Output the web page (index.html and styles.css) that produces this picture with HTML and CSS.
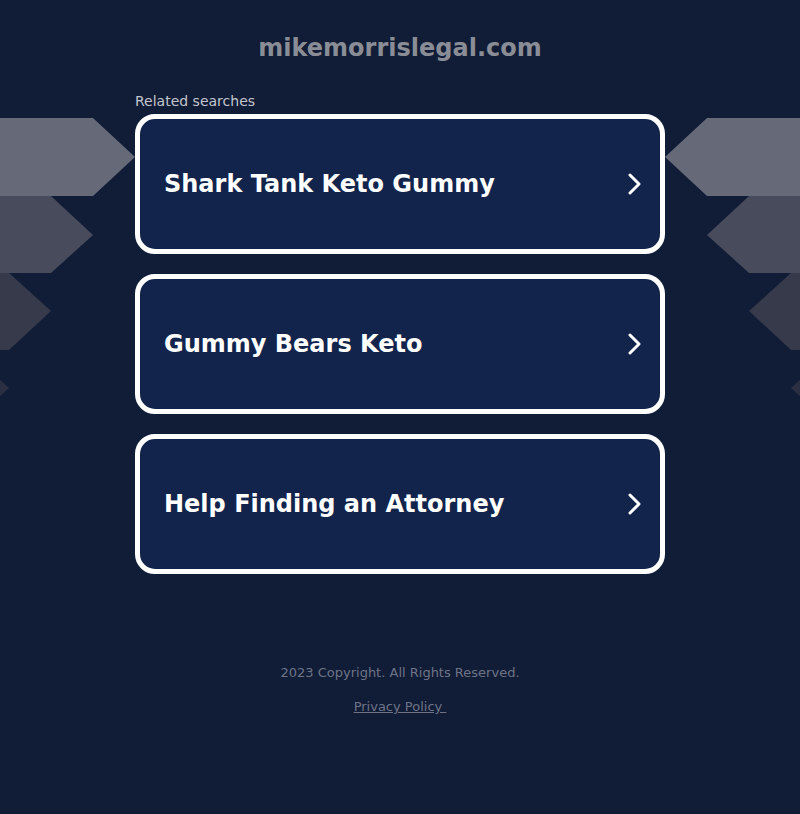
FILE: index.html
```html
<!DOCTYPE html>
<html lang="en">
<head>
<meta charset="utf-8">
<title>mikemorrislegal.com</title>
<link rel="stylesheet" href="styles.css">
</head>
<body>
<div class="page">
  <svg class="deco deco-left" width="140" height="320" viewBox="0 0 140 320" aria-hidden="true">
    <polygon points="0,0 93,0 135,39 93,78 0,78" fill="#656978"/>
    <polygon points="0,78 51,78 93,117 51,155 0,155" fill="#474b5b"/>
    <polygon points="0,155 9,155 51,193 9,232 0,232" fill="#363a4b"/>
    <polygon points="0,232 -33,232 9,270 -33,309" fill="#2a3042"/>
  </svg>
  <svg class="deco deco-right" width="140" height="320" viewBox="0 0 140 320" aria-hidden="true">
    <polygon points="140,0 47,0 5,39 47,78 140,78" fill="#656978"/>
    <polygon points="140,78 89,78 47,117 89,155 140,155" fill="#474b5b"/>
    <polygon points="140,155 131,155 89,193 131,232 140,232" fill="#363a4b"/>
    <polygon points="140,232 173,232 131,270 173,309" fill="#2a3042"/>
  </svg>

  <header class="site-title">mikemorrislegal.com</header>

  <main class="searches">
    <div class="searches-label">Related searches</div>
    <a class="search-card" href="#">
      <span class="search-text">Shark Tank Keto Gummy</span>
      <svg class="chevron" width="16" height="22" viewBox="0 0 16 22"><polyline points="3,2 12,11 3,20" fill="none" stroke="#fff" stroke-width="3" stroke-linecap="round" stroke-linejoin="round"/></svg>
    </a>
    <a class="search-card" href="#">
      <span class="search-text">Gummy Bears Keto</span>
      <svg class="chevron" width="16" height="22" viewBox="0 0 16 22"><polyline points="3,2 12,11 3,20" fill="none" stroke="#fff" stroke-width="3" stroke-linecap="round" stroke-linejoin="round"/></svg>
    </a>
    <a class="search-card" href="#">
      <span class="search-text">Help Finding an Attorney</span>
      <svg class="chevron" width="16" height="22" viewBox="0 0 16 22"><polyline points="3,2 12,11 3,20" fill="none" stroke="#fff" stroke-width="3" stroke-linecap="round" stroke-linejoin="round"/></svg>
    </a>
  </main>

  <footer class="footer">
    <div class="copyright">2023 Copyright. All Rights Reserved.</div>
    <a class="privacy" href="#">Privacy Policy </a>
  </footer>
</div>
</body>
</html>
```

FILE: styles.css
```css
html, body {
  margin: 0;
  padding: 0;
  background: #111c36;
  font-family: "DejaVu Sans", sans-serif;
}

.page {
  position: relative;
  width: 800px;
  height: 814px;
  overflow: hidden;
  display: flex;
  flex-direction: column;
  align-items: center;
}

.deco {
  position: absolute;
  top: 118px;
  overflow: visible;
}
.deco-left { left: 0; }
.deco-right { right: 0; }

.site-title {
  margin-top: 33px;
  height: 30px;
  line-height: 30px;
  font-size: 24px;
  font-weight: bold;
  color: #8a8d96;
}

.searches {
  position: relative;
  width: 530px;
  margin-top: 30px;
  display: flex;
  flex-direction: column;
  gap: 20px;
}

.searches-label {
  font-size: 14px;
  line-height: 16px;
  color: #c1c5cd;
  margin-bottom: -15px;
}

.search-card {
  box-sizing: border-box;
  height: 140px;
  border: 5px solid #ffffff;
  border-radius: 20px;
  background: #12244c;
  display: flex;
  align-items: center;
  justify-content: space-between;
  padding: 0 17px 0 24px;
  text-decoration: none;
}

.search-text {
  font-size: 24px;
  font-weight: bold;
  color: #ffffff;
}

.chevron {
  display: block;
}

.footer {
  margin-top: 91px;
  display: flex;
  flex-direction: column;
  align-items: center;
  font-size: 13px;
  color: #6d7487;
}

.copyright {
  line-height: 16px;
}

.privacy {
  margin-top: 18px;
  line-height: 16px;
  color: #6d7487;
  text-decoration: underline;
  white-space: pre;
}
```
